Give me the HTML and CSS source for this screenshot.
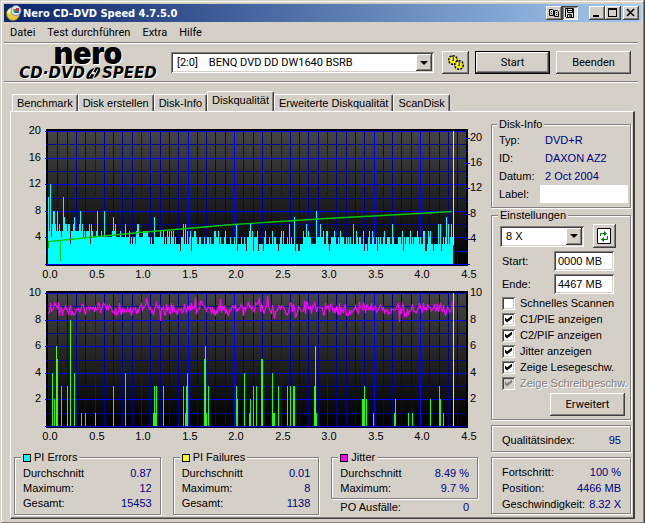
FILE: index.html
```html
<!DOCTYPE html>
<html lang="de">
<head>
    <meta charset="UTF-8">
    <meta name="viewport" content="width=device-width, initial-scale=1.0">
    <title>Nero CD-DVD Speed 4.7.5.0</title>
    <link rel="stylesheet" href="styles.css">
</head>
<body>
    <div class="window">
        <header class="titlebar">
            <svg class="app-icon" viewBox="0 0 16 16" aria-hidden="true">
                <circle cx="7" cy="9" r="6.5" fill="#e8c840" stroke="#8a7420"/>
                <path d="M1 8a6 6 0 0 1 6-5v3a3 3 0 0 0-3 3z" fill="#fff6b0"/>
                <circle cx="10" cy="5.5" r="5" fill="#dfe8f4" stroke="#8090a8"/>
                <path d="M7 4h3v4H8z" fill="#3a9a50"/>
                <path d="M10 3h3v3h-3z" fill="#d03030"/>
                <path d="M9 6h4v2H9z" fill="#3060c0"/>
            </svg>
            <h1>Nero CD-DVD Speed 4.7.5.0</h1>
            <div class="caption-group tools">
                <button type="button" class="caption-btn" aria-label="Kopieren">
                    <svg viewBox="0 0 12 10"><path d="M1.500 1.500h3l1 1v5h-4zM6.500 2.500h3l1 1v5h-4zM3 3.500h1M3 5.500h1M8 4.500h1M8 6.500h1" fill="none" stroke="#000"/></svg>
                </button>
                <button type="button" class="caption-btn pressed" aria-label="Speichern">
                    <svg viewBox="0 0 12 10"><path d="M1.500 .5h8v9h-7l-1-1zM3.500 .5v4h5v-4M3.500 9.500v-3h4v3M6 7v2M4 2.500h4" fill="none" stroke="#000"/></svg>
                </button>
            </div>
            <div class="caption-group">
                <button type="button" class="caption-btn" aria-label="Minimieren">
                    <svg viewBox="0 0 12 10"><path d="M2 7h6v2H2z"/></svg>
                </button>
                <button type="button" class="caption-btn" aria-label="Maximieren">
                    <svg viewBox="0 0 12 10"><path d="M1 0h9v9H1zM2 2v6h7V2z" fill-rule="evenodd"/></svg>
                </button>
            </div>
            <button type="button" class="caption-btn" aria-label="Schließen">
                <svg viewBox="0 0 12 10"><path d="M2 1l7 7M9 1L2 8" fill="none" stroke="#000" stroke-width="1.6"/></svg>
            </button>
        </header>

        <nav class="menubar">
            <button type="button">Datei</button>
            <button type="button">Test durchführen</button>
            <button type="button">Extra</button>
            <button type="button">Hilfe</button>
        </nav>

        <div class="toolbar">
            <div class="logo">
                <div class="logo-nero">nero</div>
                <div class="logo-speed">
                    <span>CD·DVD</span>
                    <svg viewBox="0 0 17 14" aria-hidden="true">
                        <path d="M1 12C1 6 6 1 13 1c3 0 3 3 2 5-2 5-6 7-10 7-2 0-4 0-4-1z" fill="#000" stroke="#fff" stroke-width=".5"/>
                        <path d="M4 11l6-9M8 12l5-9" stroke="#fff"/>
                        <circle cx="8.500" cy="7" r="1.500" fill="#fff"/>
                    </svg>
                    <span>SPEED</span>
                </div>
            </div>
            <div class="combo drive">
                <select aria-label="Laufwerk">
                    <option>[2:0] &nbsp;&nbsp; BENQ DVD DD DW1640 BSRB</option>
                </select>
                <span class="combo-arrow"></span>
            </div>
            <button type="button" class="btn icon-btn" aria-label="Optionen">
                <svg width="18" height="18" viewBox="0 0 18 18">
                    <g fill="#f8f000">
                        <circle cx="6" cy="6" r="4" stroke="#000" stroke-width="2" stroke-dasharray="2 1"/>
                        <circle cx="6" cy="6" r="3.500"/>
                        <circle cx="12" cy="11" r="4" stroke="#000" stroke-width="2" stroke-dasharray="2 1"/>
                        <circle cx="12" cy="11" r="3.500"/>
                    </g>
                    <path d="M6 2v5M12 7v5" stroke="#505070" stroke-width="2"/>
                    <path d="M5 3v3M11 8v3" stroke="#fff"/>
                </svg>
            </button>
            <button type="button" class="btn wide default">Start</button>
            <button type="button" class="btn wide">Beenden</button>
        </div>

        <div class="tabs" role="tablist">
            <button type="button" role="tab">Benchmark</button>
            <button type="button" role="tab">Disk erstellen</button>
            <button type="button" role="tab">Disk-Info</button>
            <button type="button" role="tab" class="active" aria-selected="true">Diskqualität</button>
            <button type="button" role="tab">Erweiterte Diskqualität</button>
            <button type="button" role="tab">ScanDisk</button>
        </div>

        <main class="panel">
            <section class="results">
                <svg class="chart" id="pieChart" viewBox="0 0 464 162" role="img" aria-label="PI Errors"></svg>
                <svg class="chart" id="pifChart" viewBox="0 0 464 162" role="img" aria-label="PI Failures, Jitter"></svg>

                <div class="stats">
                    <fieldset>
                        <legend><i class="swatch cyan"></i>PI Errors</legend>
                        <dl>
                            <div><dt>Durchschnitt</dt><dd>0.87</dd></div>
                            <div><dt>Maximum:</dt><dd>12</dd></div>
                            <div><dt>Gesamt:</dt><dd>15453</dd></div>
                        </dl>
                    </fieldset>
                    <fieldset>
                        <legend><i class="swatch yellow"></i>PI Failures</legend>
                        <dl>
                            <div><dt>Durchschnitt</dt><dd>0.01</dd></div>
                            <div><dt>Maximum:</dt><dd>8</dd></div>
                            <div><dt>Gesamt:</dt><dd>1138</dd></div>
                        </dl>
                    </fieldset>
                    <div>
                        <fieldset>
                            <legend><i class="swatch magenta"></i>Jitter</legend>
                            <dl>
                                <div><dt>Durchschnitt</dt><dd>8.49 %</dd></div>
                                <div><dt>Maximum:</dt><dd>9.7 %</dd></div>
                            </dl>
                        </fieldset>
                        <dl class="po">
                            <div><dt>PO Ausfälle:</dt><dd>0</dd></div>
                        </dl>
                    </div>
                </div>
            </section>

            <aside class="side">
                <fieldset class="disk-info">
                    <legend>Disk-Info</legend>
                    <dl>
                        <div><dt>Typ:</dt><dd>DVD+R</dd></div>
                        <div><dt>ID:</dt><dd>DAXON AZ2</dd></div>
                        <div><dt>Datum:</dt><dd>2 Oct 2004</dd></div>
                    </dl>
                    <div class="label-row">
                        <label for="diskLabel">Label:</label>
                        <input type="text" id="diskLabel">
                    </div>
                </fieldset>

                <fieldset class="settings">
                    <legend>Einstellungen</legend>
                    <div class="speed-row">
                        <div class="combo">
                            <select aria-label="Geschwindigkeit">
                                <option>8 X</option>
                            </select>
                            <span class="combo-arrow"></span>
                        </div>
                        <button type="button" class="btn refresh" aria-label="Aktualisieren">
                            <svg width="15" height="17" viewBox="0 0 15 17">
                                <path d="M.5.500h13v15H.5z" fill="#fff" stroke="#000"/>
                                <path d="M3.500 8V5.500h4M10.500 8v3.500h-4" fill="none" stroke="#008000"/>
                                <path d="M7 3l3 2.500L7 8zM7 9l-3 2.500L7 14z" fill="#008000"/>
                            </svg>
                        </button>
                    </div>
                    <div class="range-row">
                        <label for="start">Start:</label>
                        <input type="text" id="start" value="0000 MB">
                    </div>
                    <div class="range-row">
                        <label for="end">Ende:</label>
                        <input type="text" id="end" value="4467 MB">
                    </div>
                    <div class="checks">
                        <label><input type="checkbox">Schnelles Scannen</label>
                        <label><input type="checkbox" checked>C1/PIE anzeigen</label>
                        <label><input type="checkbox" checked>C2/PIF anzeigen</label>
                        <label><input type="checkbox" checked>Jitter anzeigen</label>
                        <label><input type="checkbox" checked>Zeige Lesegeschw.</label>
                        <label class="disabled"><input type="checkbox" checked disabled>Zeige Schreibgeschw.</label>
                    </div>
                    <button type="button" class="btn wide advanced">Erweitert</button>
                </fieldset>

                <dl class="box quality">
                    <div><dt>Qualitätsindex:</dt><dd>95</dd></div>
                </dl>
                <dl class="box progress">
                    <div><dt>Fortschritt:</dt><dd>100 %</dd></div>
                    <div><dt>Position:</dt><dd>4466 MB</dd></div>
                    <div><dt>Geschwindigkeit:</dt><dd>8.32 X</dd></div>
                </dl>
            </aside>
        </main>
    </div>

    <script src="charts.js"></script>
</body>
</html>
```
FILE: styles.css
```css
* {
    box-sizing: border-box;
}

body {
    margin: 0;
    background-color: #d4d0c8;
    font-family: "Liberation Sans", Arial, sans-serif;
    font-size: 11px;
    line-height: 13px;
    color: #000;
}

button,
input,
select {
    font: inherit;
    color: inherit;
    margin: 0;
    padding: 0;
    border: none;
    border-radius: 0;
    outline: none;
}

.window {
    display: flex;
    flex-direction: column;
    min-height: 100vh;
    padding: 4px 4px 5px;
    background-color: #d4d0c8;
    box-shadow: inset -1px -1px #404040, inset 1px 1px #d4d0c8, inset -2px -2px #808080, inset 2px 2px #fff;
}

/* Title bar */
.titlebar {
    display: flex;
    align-items: center;
    height: 18px;
    padding: 0 2px;
    background-image: linear-gradient(90deg, #0a246a, #a6caf0);
}

.app-icon {
    width: 16px;
    height: 16px;
    margin-right: 1px;
}

h1 {
    flex: 1;
    margin: 0;
    color: #fff;
    font-family: "DejaVu Sans Condensed", "DejaVu Sans", sans-serif;
    font-size: 11px;
    font-weight: bold;
    white-space: nowrap;
}

.caption-group {
    display: flex;
    margin-right: 2px;
}

.caption-group.tools {
    margin-right: 11px;
}

.caption-btn {
    display: flex;
    width: 16px;
    height: 14px;
    padding: 2px;
    background-color: #d4d0c8;
    box-shadow: inset -1px -1px #404040, inset 1px 1px #fff, inset -2px -2px #808080;
}

.caption-btn.pressed {
    background-color: #e9e7e3;
    box-shadow: inset 1px 1px #404040, inset -1px -1px #fff, inset 2px 2px #808080;
}

.caption-btn svg {
    width: 12px;
    height: 10px;
}

/* Menu */
.menubar {
    display: flex;
    height: 20px;
    font-family: Roboto, sans-serif;
}

.menubar button {
    padding: 0 6px;
    background: none;
}

/* Toolbar */
.toolbar {
    display: flex;
    align-items: center;
    height: 41px;
    margin-right: 3px;
    padding-right: 7px;
    border-top: 1px solid #808080;
    border-bottom: 1px solid #fff;
    box-shadow: inset 0 1px #fff, inset 0 -1px #808080;
    font-family: Roboto, sans-serif;
}

.logo {
    width: 148px;
    margin: 0 9px 0 10px;
}

.logo-nero {
    font-family: Inter, "Liberation Sans", sans-serif;
    font-size: 30px;
    font-weight: 900;
    line-height: 18px;
    text-align: center;
    text-shadow: 1px 1px #fff;
}

.logo-speed {
    display: flex;
    align-items: center;
    justify-content: center;
    margin-top: 3px;
    font-family: "DejaVu Sans", sans-serif;
    font-size: 15px;
    font-weight: bold;
    font-style: italic;
    line-height: 16px;
    text-shadow: 1px 1px #fff;
}

.logo-speed svg {
    width: 17px;
    height: 14px;
}

.combo {
    display: flex;
    background-color: #fff;
    padding: 2px;
    box-shadow: inset 1px 1px #808080, inset -1px -1px #fff, inset 2px 2px #404040, inset -2px -2px #d4d0c8;
}

.combo select {
    flex: 1;
    min-width: 0;
    padding-left: 4px;
    appearance: none;
    background: none;
}

.combo-arrow {
    display: flex;
    align-items: center;
    justify-content: center;
    width: 16px;
    background-color: #d4d0c8;
    box-shadow: inset -1px -1px #404040, inset 1px 1px #fff, inset -2px -2px #808080;
    pointer-events: none;
}

.combo-arrow::before {
    content: "";
    border: 4px solid transparent;
    border-top-color: #000;
    border-bottom: none;
}

.drive {
    flex: 1;
    height: 21px;
}

.btn {
    display: flex;
    align-items: center;
    justify-content: center;
    height: 23px;
    background-color: #d4d0c8;
    box-shadow: inset -1px -1px #404040, inset 1px 1px #fff, inset -2px -2px #808080;
}

.btn.wide {
    width: 75px;
    font-family: Roboto, sans-serif;
}

.btn.default {
    border: 1px solid #000;
    margin: 0 6px;
}

.icon-btn {
    width: 27px;
    margin-left: 8px;
}

/* Tabs */
.tabs {
    display: flex;
    align-items: flex-end;
    height: 28px;
    padding-left: 8px;
}

.tabs button {
    height: 17px;
    padding: 0 4px;
    background-color: #d4d0c8;
    border: 1px solid #fff;
    border-right-color: #404040;
    border-bottom: none;
    border-radius: 2px 2px 0 0;
    box-shadow: inset -1px 0 #808080;
    white-space: nowrap;
}

.tabs .active {
    height: 21px;
    margin-bottom: -1px;
    padding-bottom: 4px;
}

/* Panel */
.panel {
    display: grid;
    grid-template-columns: 1fr 140px;
    gap: 13px;
    flex: 1;
    margin: 0 6px;
    padding: 0 2px 3px 3px;
    border: 1px solid #fff;
    border-right: 2px solid #404040;
    border-bottom: 1px solid #404040;
    box-shadow: inset 0 -1px #808080;
}

.results {
    padding-top: 10px;
}

.chart {
    display: block;
    width: 100%;
    height: auto;
    overflow: visible;
}

fieldset {
    min-width: 0;
    margin: 0;
    padding: 2px 8px;
    border: 1px solid #808080;
    box-shadow: 1px 1px #fff, inset 1px 1px #fff;
}

legend {
    display: flex;
    align-items: center;
    padding: 0 2px;
    margin-left: -2px;
    background-color: #d4d0c8;
}

dl {
    margin: 0;
}

dl div {
    display: flex;
    justify-content: space-between;
    white-space: nowrap;
}

dd {
    margin: 0;
    color: #000080;
}

.stats {
    display: grid;
    grid-template-columns: 1fr 1fr 1fr;
    gap: 12px;
    margin-top: 5px;
}

.stats dl div {
    line-height: 15px;
}

.stats .po {
    padding: 1px 9px 0;
}

.swatch {
    width: 8px;
    height: 8px;
    margin-right: 3px;
    border: 1px solid #000;
}

.cyan {
    background-color: #0ff;
}

.yellow {
    background-color: #ff0;
}

.magenta {
    background-color: #f0f;
}

/* Right column */
.side {
    padding-top: 6px;
}

.disk-info {
    padding: 0 2px 4px 7px;
}

.disk-info dl div,
.label-row {
    display: grid;
    grid-template-columns: 46px 1fr;
    line-height: 18px;
}

.label-row {
    grid-template-columns: 41px 1fr;
}

.label-row input {
    width: 100%;
    height: 18px;
    background-color: #fff;
}

.settings {
    margin-top: 1px;
    padding: 2px 5px 3px 8px;
}

.speed-row {
    display: flex;
    align-items: center;
    gap: 9px;
}

.speed-row .combo {
    width: 84px;
    height: 21px;
}

.refresh {
    width: 23px;
    height: 24px;
}

.range-row {
    display: flex;
    justify-content: space-between;
    align-items: center;
    margin-top: 3px;
    padding: 0 11px 0 2px;
}

.range-row input {
    width: 60px;
    height: 20px;
    padding: 0 4px;
    background-color: #fff;
    box-shadow: inset 1px 1px #808080, inset -1px -1px #fff, inset 2px 2px #404040, inset -2px -2px #d4d0c8;
}

.checks {
    margin: 1px 0 2px 2px;
}

.checks label {
    display: flex;
    align-items: center;
    gap: 5px;
    height: 16px;
    white-space: nowrap;
}

.checks input {
    display: flex;
    align-items: center;
    justify-content: center;
    flex: none;
    width: 13px;
    height: 13px;
    appearance: none;
    background-color: #fff;
    box-shadow: inset 1px 1px #808080, inset -1px -1px #fff, inset 2px 2px #404040, inset -2px -2px #d4d0c8;
}

.checks input:checked::before {
    content: "";
    width: 7px;
    height: 7px;
    background-color: #000;
    clip-path: polygon(0 29%, 29% 57%, 100% 0, 100% 43%, 29% 100%, 0 72%);
}

.checks input:disabled {
    background-color: #d4d0c8;
}

.checks input:disabled::before {
    background-color: #808080;
}

.disabled {
    color: #808080;
    text-shadow: 1px 1px #fff;
}

.advanced {
    margin-left: auto;
}

.box {
    padding: 6px 9px 1px 10px;
    line-height: 16px;
    border: 1px solid #808080;
    box-shadow: 1px 1px #fff, inset 1px 1px #fff;
}

.quality {
    margin-top: 5px;
    padding-bottom: 3px;
}

.progress {
    margin-top: 5px;
}
```
FILE: charts.js
```js
// plot area inside the 464x162 drawing
const LEFT = 34;
const RIGHT = 452;
const TOP = 9;
const BOTTOM = 142;
const STEP = 9.3; // 0.1 GB
const END = 405; // last scanned column

// small seeded generator so the curves stay the same on every load
let seed = 7;
function rand() {
    seed = (seed * 16807) % 2147483647;
    return seed / 2147483647;
}

function rect(x, y, w, h, fill) {
    return `<rect x="${x}" y="${y}" width="${w}" height="${h}" fill="${fill}"/>`;
}

function text(x, y, value, anchor) {
    return `<text x="${x}" y="${y}" text-anchor="${anchor}" font-size="11">${value}</text>`;
}

function grid(id, max, labelStep) {
    let out = `<defs><linearGradient id="${id}" x1="0" y1="0" x2="0" y2="1">
        <stop offset="0" stop-color="#444"/><stop offset="1" stop-color="#000"/>
        </linearGradient></defs>`;
    out += rect(LEFT - 2, TOP - 2, RIGHT - LEFT + 4, BOTTOM - TOP + 4, '#000');
    out += rect(LEFT, TOP, RIGHT - LEFT, BOTTOM - TOP, `url(#${id})`);

    for (let i = 1; i < 45; i++) {
        if (i % 5) out += rect(Math.round(LEFT + i * STEP), TOP, 1, BOTTOM - TOP, '#000090');
    }
    for (let i = 1; i < 10; i += 2) {
        out += rect(LEFT - 2, Math.round(TOP + i * 13.3), RIGHT - LEFT + 2, 1, '#000090');
    }
    for (let i = 5; i < 45; i += 5) {
        out += rect(Math.round(LEFT + i * STEP), TOP, 1, BOTTOM - TOP, '#00f');
    }
    for (let i = 0; i <= 10; i += 2) {
        const y = Math.round(TOP + i * 13.3);
        out += rect(LEFT - 3, y, RIGHT - LEFT + 3, 1, '#00f');
        if (i < 10) out += text(LEFT - 7, y + 3, max - i / 2 * labelStep, 'end');
    }
    for (let i = 0; i <= 9; i++) {
        out += text(Math.round(LEFT + 2 + i * 46.5), 156, (i / 2).toFixed(1), 'middle');
    }
    return out;
}

function drawPie() {
    const peaks = {
        0: 10, 2: 12, 4: 6, 5: 8, 6: 8, 7: 6, 9: 8, 11: 6, 15: 10, 16: 7, 17: 6, 18: 6,
        20: 6, 21: 6, 25: 6, 26: 7, 31: 6, 32: 8, 34: 6, 41: 6, 43: 6, 49: 8, 56: 8, 65: 7, 67: 6,
        77: 6, 89: 6, 90: 6, 106: 7, 135: 6, 137: 6, 188: 6, 202: 6, 241: 6, 246: 7,
        258: 6, 268: 8, 272: 6, 305: 6, 344: 6, 390: 6, 392: 6, 398: 7, 400: 6, 403: 6
    };
    let out = grid('pieBg', 20, 4);

    let d = '';
    for (let x = 0; x < END; x++) {
        const r = rand();
        let value;
        if (x < 45) value = r < 0.15 ? 3 : r < 0.3 ? 4 : 5;
        else if (x < 125) value = r < 0.12 ? 3 : r < 0.85 ? 4 : 5;
        else value = r < 0.08 ? 2 : r < 0.6 ? 3 : r < 0.89 ? 4 : 5;
        value = peaks[x] || value;
        const h = Math.round(value * 6.65);
        d += `M${LEFT + x} ${BOTTOM - h}h1v${h}h-1z`;
    }
    out += `<path d="${d}" fill="#0ff"/>`;

    // end of disc
    out += rect(LEFT + END, TOP, 1, 114, '#d8d8d8');

    // reading speed
    out += `<path d="M34.500 126V119.500L80 115 126 110.500 173 106.500 219 102.500 266 99.500 312 96.500 359 94 405 91.500 438 89.500M46.500 118V139"
        fill="none" stroke="#00c800" stroke-width="1.3"/>`;

    // speed axis
    for (let i = 0; i <= 10; i++) {
        const y = Math.round(BOTTOM - i * 12.6);
        out += rect(RIGHT, y, i % 2 ? 2 : 4, 1, '#00f');
        if (i && i % 2 === 0) out += text(RIGHT + 4, y + 3, i * 2, 'start');
    }
    document.getElementById('pieChart').innerHTML = out;
}

function drawPif() {
    const failures = [
        [4, 4], [6, 2], [8, 6], [9, 5], [13, 3], [19, 3], [22, 8], [26, 4], [33, 1], [37, 1], [47, 1],
        [65, 3], [77, 4], [105, 1], [106, 3], [107, 1], [108, 3], [115, 3], [135, 3], [137, 1],
        [138, 3], [139, 4], [156, 5], [157, 6], [158, 1], [160, 3], [188, 3], [189, 2], [196, 4],
        [201, 1], [202, 2], [205, 3], [208, 3], [213, 5], [214, 5], [224, 4], [225, 1], [226, 1],
        [230, 3], [239, 3], [242, 3], [245, 3], [246, 3], [266, 3], [267, 6], [268, 1], [314, 2],
        [315, 2], [316, 3], [318, 2], [325, 1], [346, 1], [347, 2], [360, 1], [364, 1], [382, 2],
        [391, 3], [392, 2], [395, 1]
    ];
    const spikes = { 98: 14, 112: 37, 147: 14, 172: 15, 211: 14, 219: 12, 226: 35, 311: 18, 351: 38, 404: 18 };
    let out = grid('pifBg', 10, 2);

    failures.forEach(([x, value]) => {
        const h = Math.round(value * 13.3);
        out += rect(LEFT + x, BOTTOM - h, 1, h, value > 5 ? '#50ff00' : '#20ff00');
    });

    // jitter
    let points = '';
    for (let x = 0; x < END; x++) {
        const y = spikes[x] || Math.round(25 + (rand() + rand() - 1) * 8 + Math.sin(x / 9));
        points += `${LEFT + x + 0.5},${y} `;
    }
    out += `<polyline points="${points}" fill="none" stroke="#f0f" stroke-width="1.2"/>`;
    out += rect(LEFT + END, TOP, 1, BOTTOM - TOP, '#d8d8d8');

    for (let i = 0; i < 5; i++) {
        out += text(RIGHT + 4, Math.round(TOP + i * 26.6) + 3, 10 - i * 2, 'start');
    }
    document.getElementById('pifChart').innerHTML = out;
}

drawPie();
drawPif();
```
